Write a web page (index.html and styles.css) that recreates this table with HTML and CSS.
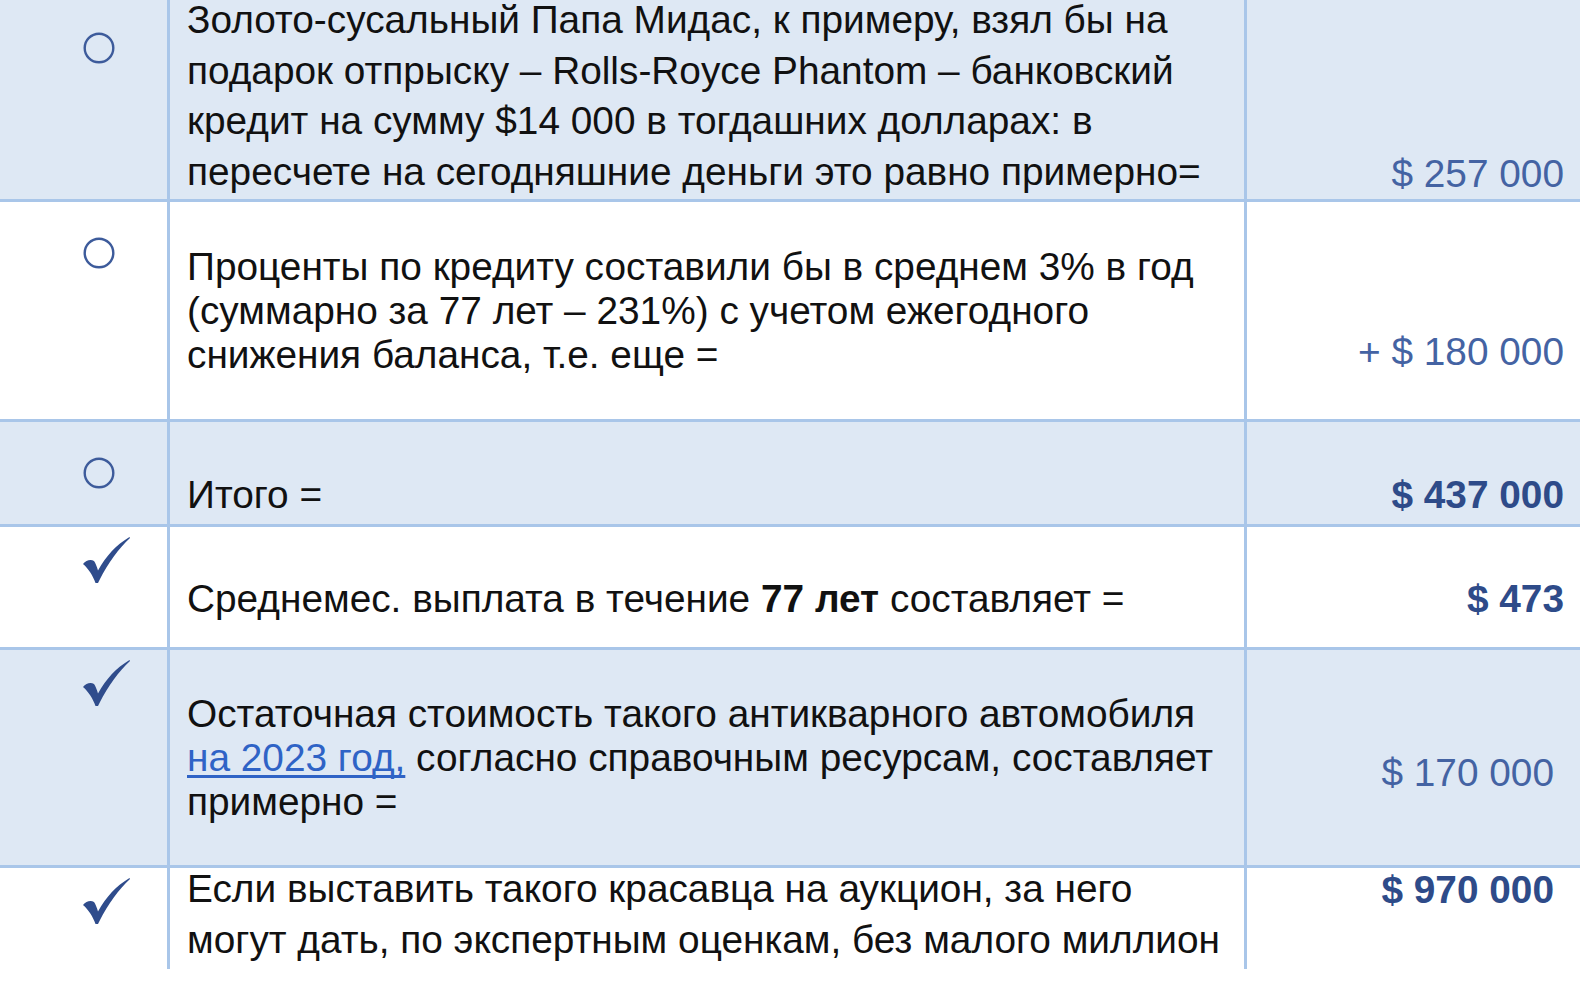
FILE: index.html
```html
<!DOCTYPE html>
<html lang="ru">
<head>
<meta charset="utf-8">
<title>Rolls-Royce Phantom</title>
<link rel="stylesheet" href="styles.css">
</head>
<body>
<div class="table">
  <div class="row shaded r1">
    <div class="mark"><svg class="circle" viewBox="0 0 32 32"><circle cx="16" cy="16" r="14.3"/></svg></div>
    <div class="text tall">Золото-сусальный Папа Мидас, к примеру, взял бы на<br>подарок отпрыску – Rolls-Royce Phantom – банковский<br>кредит на сумму $14 000 в тогдашних долларах: в<br>пересчете на сегодняшние деньги это равно примерно=</div>
    <div class="value">$ 257 000</div>
  </div>
  <div class="row r2">
    <div class="mark"><svg class="circle" viewBox="0 0 32 32"><circle cx="16" cy="16" r="14.3"/></svg></div>
    <div class="text">Проценты по кредиту составили бы в среднем 3% в год<br>(суммарно за 77 лет – 231%) с учетом ежегодного<br>снижения баланса, т.е. еще =</div>
    <div class="value">+ $ 180 000</div>
  </div>
  <div class="row shaded r3">
    <div class="mark"><svg class="circle" viewBox="0 0 32 32"><circle cx="16" cy="16" r="14.3"/></svg></div>
    <div class="text">Итого =</div>
    <div class="value strong">$ 437 000</div>
  </div>
  <div class="row r4">
    <div class="mark check-cell"><svg class="check" viewBox="0 0 47 46"><path d="M0,27 C3,23 8,22 11,24 C12.5,26 14,30 15,33.5 C23,19 33,8 46.5,0 L47,1 C36,11 25,26 16.5,43 L15,46 L12.5,46 C10,39 5.5,31.5 0,27 Z"/></svg></div>
    <div class="text">Среднемес. выплата в течение <b>77 лет</b> составляет =</div>
    <div class="value strong">$ 473</div>
  </div>
  <div class="row shaded r5">
    <div class="mark check-cell"><svg class="check" viewBox="0 0 47 46"><path d="M0,27 C3,23 8,22 11,24 C12.5,26 14,30 15,33.5 C23,19 33,8 46.5,0 L47,1 C36,11 25,26 16.5,43 L15,46 L12.5,46 C10,39 5.5,31.5 0,27 Z"/></svg></div>
    <div class="text">Остаточная стоимость такого антикварного автомобиля<br><a class="link" href="#">на 2023 год,</a> согласно справочным ресурсам, составляет<br>примерно =</div>
    <div class="value inset">$ 170 000</div>
  </div>
  <div class="row r6">
    <div class="mark check-cell"><svg class="check" viewBox="0 0 47 46"><path d="M0,27 C3,23 8,22 11,24 C12.5,26 14,30 15,33.5 C23,19 33,8 46.5,0 L47,1 C36,11 25,26 16.5,43 L15,46 L12.5,46 C10,39 5.5,31.5 0,27 Z"/></svg></div>
    <div class="text tall">Если выставить такого красавца на аукцион, за него<br>могут дать, по экспертным оценкам, без малого миллион</div>
    <div class="value strong inset">$ 970 000</div>
  </div>
</div>
</body>
</html>
```

FILE: styles.css
```css
html, body {
  margin: 0;
  padding: 0;
  background: #ffffff;
}

body {
  font-family: "Liberation Sans", Arial, sans-serif;
  font-size: 38.8px;
  color: #111111;
  overflow: hidden;
}

.table {
  display: flex;
  flex-direction: column;
  margin-top: -5px;
  width: 1580px;
}

.row {
  display: grid;
  grid-template-columns: 167px 1077px 1fr;
  border-bottom: 3px solid #a9c6e9;
  box-sizing: border-box;
}

.row.shaded {
  background: #dee8f4;
}

.r1 { height: 207px; }
.r2 { height: 220px; }
.r3 { height: 105px; }
.r4 { height: 123px; }
.r5 { height: 218px; }
.r6 { height: 101px; border-bottom: none; }

.mark {
  padding-left: 83px;
  padding-top: 35px;
}

.r1 .mark {
  padding-top: 37px;
}

.mark.check-cell {
  padding-top: 10px;
}

.circle {
  display: block;
  width: 32px;
  height: 32px;
}

.circle circle {
  fill: none;
  stroke: #3d5b9b;
  stroke-width: 2.4;
}

.check {
  display: block;
  width: 47px;
  height: 46px;
}

.check path {
  fill: #2f4c8c;
}

.text {
  border-left: 3px solid #a9c6e9;
  padding-left: 17px;
  line-height: 44px;
  white-space: nowrap;
}

.text.tall {
  line-height: 50.5px;
}

.text b {
  font-weight: 700;
  color: #111;
}

.value {
  border-left: 3px solid #a9c6e9;
  text-align: right;
  padding-right: 16px;
  line-height: 44px;
  color: #4463a3;
  white-space: nowrap;
}

.value.strong {
  font-weight: 700;
  color: #2e4b89;
}

.value.inset {
  padding-right: 26px;
}

.link {
  color: #2f63c6;
  text-decoration: underline;
  text-decoration-thickness: 2.5px;
  text-underline-offset: 4px;
  text-decoration-skip-ink: none;
}

.r1 .text { padding-top: 0; }
.r1 .value { padding-top: 157px; }

.r2 .text { padding-top: 43px; }
.r2 .value { padding-top: 128px; }

.r3 .text { padding-top: 51px; }
.r3 .value { padding-top: 51px; }

.r4 .text { padding-top: 50px; }
.r4 .value { padding-top: 50px; }

.r5 .text { padding-top: 42px; }
.r5 .value { padding-top: 101px; }

.r6 .text { margin-top: -4px; }
.r6 .value { padding-top: 0; }
```
